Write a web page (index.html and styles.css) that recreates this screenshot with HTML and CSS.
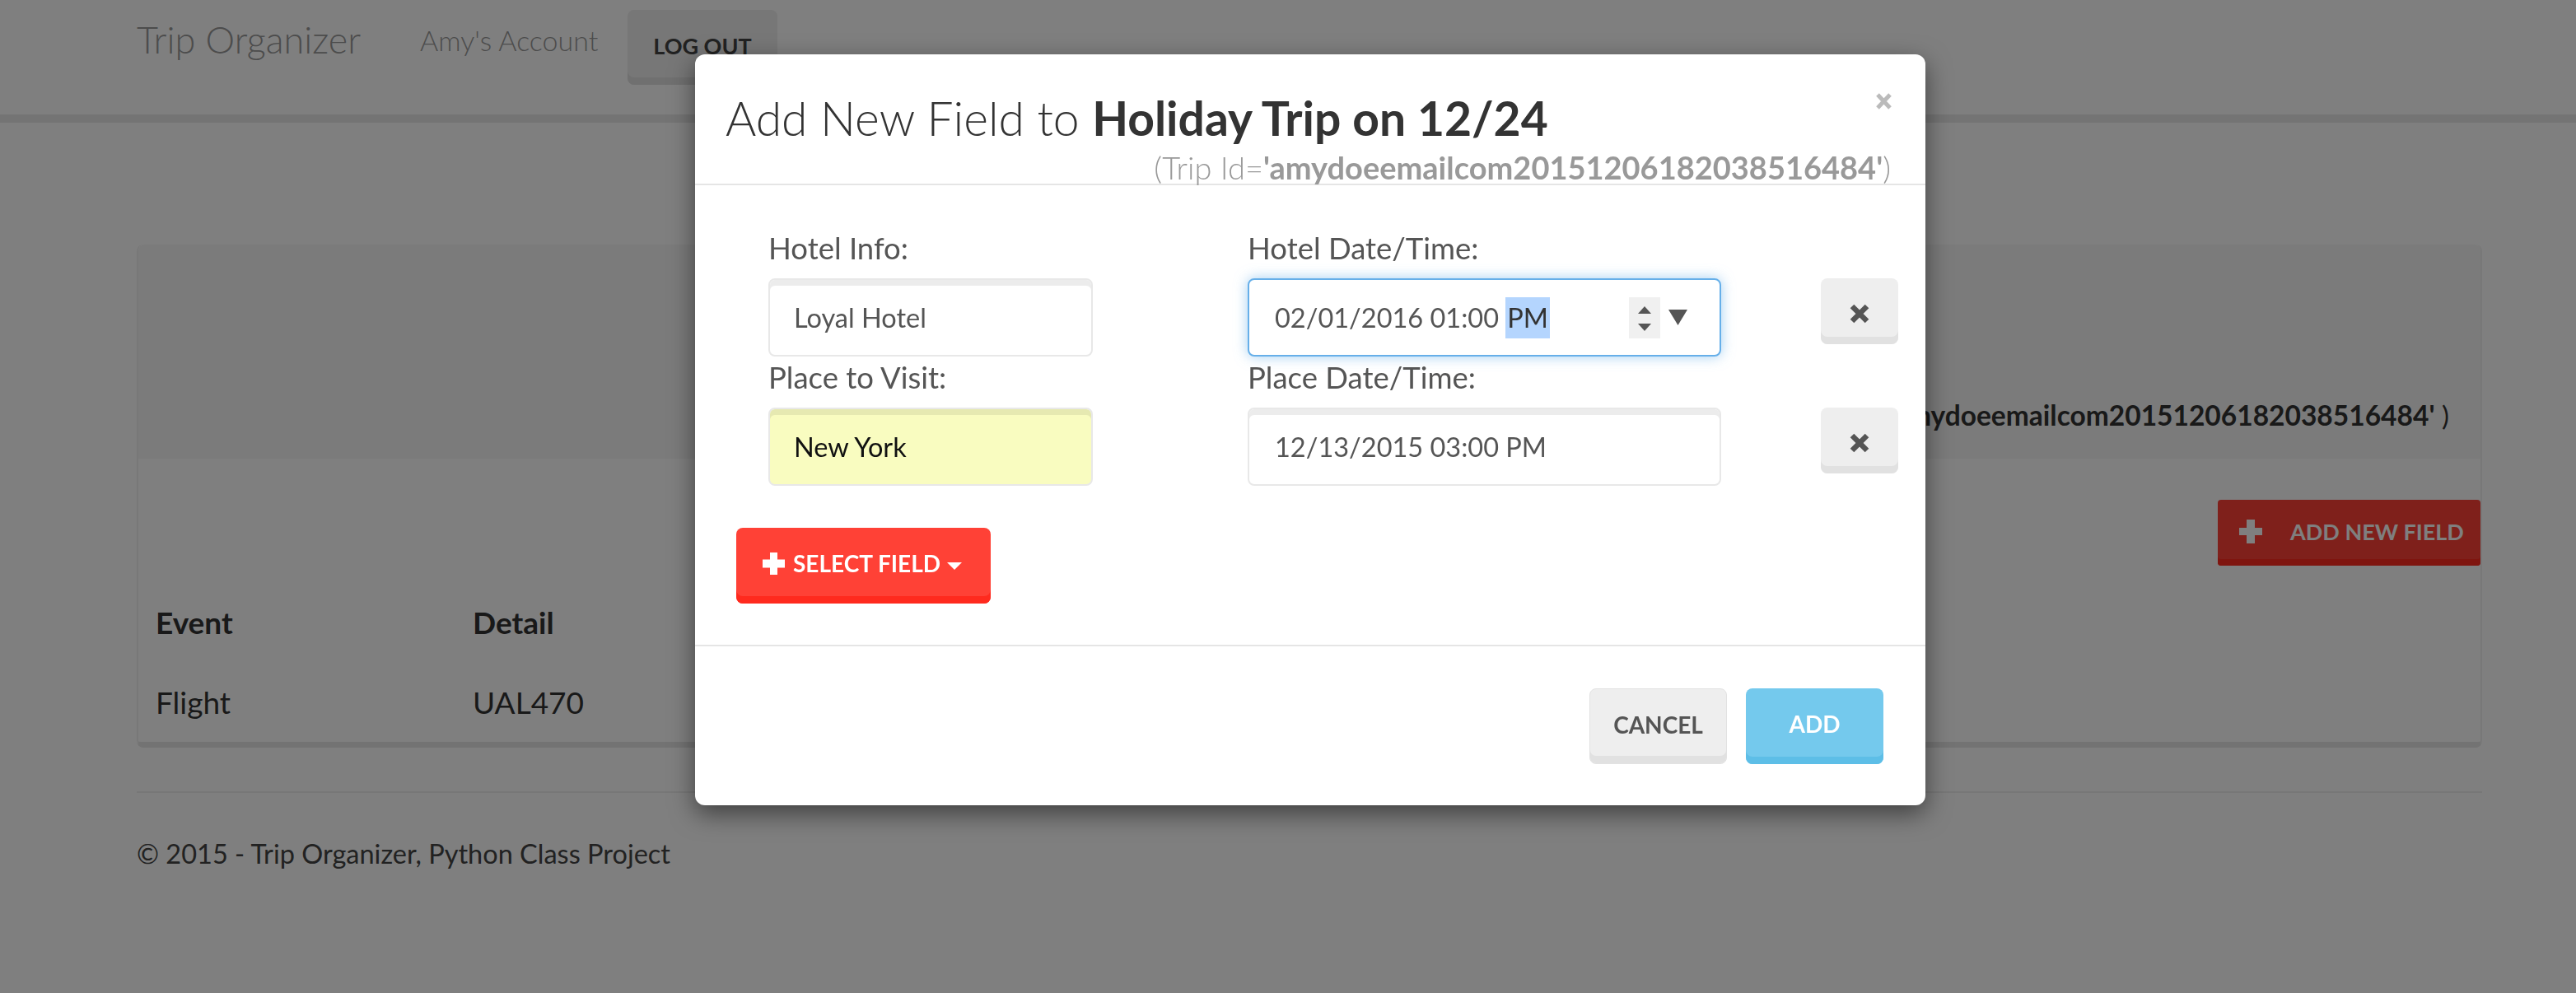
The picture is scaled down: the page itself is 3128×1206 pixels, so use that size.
FILE: index.html
```html
<!DOCTYPE html>
<html lang="en">
<head>
<meta charset="utf-8">
<title>Trip Organizer</title>
<link rel="stylesheet" href="styles.css">
</head>
<body>
<header class="navbar">
  <div class="nav-inner">
    <a class="brand">Trip Organizer</a>
    <a class="nav-link">Amy's Account</a>
    <button class="btn-logout">LOG OUT</button>
  </div>
</header>

<main class="container">
  <section class="panel">
    <div class="panel-heading">
      <p class="trip-id">(Trip Id=<b>'amydoeemailcom20151206182038516484'</b> )</p>
    </div>
    <div class="panel-body">
      <div class="actions">
        <button class="btn-add-field">
          <svg class="plus-lg" width="28" height="29" viewBox="0 0 28 29"><rect x="9" y="0" width="10" height="29"/><rect x="0" y="10" width="28" height="9"/></svg>
          <span>ADD NEW FIELD</span>
        </button>
      </div>
      <div class="table">
        <div class="th">Event</div><div class="th">Detail</div>
        <div class="td">Flight</div><div class="td">UAL470</div>
      </div>
    </div>
  </section>
  <footer class="footer">
    <hr class="footer-rule">
    <p class="footer-text">© 2015 - Trip Organizer, Python Class Project</p>
  </footer>
</main>

<div class="backdrop"></div>

<div class="modal">
  <div class="modal-header">
    <div class="title-row">
      <h2 class="modal-title">Add New Field to <b>Holiday Trip on 12/24</b></h2>
      <svg class="close" width="21" height="20" viewBox="0 0 21 20"><path d="M3 2 L18 18 M18 2 L3 18"/></svg>
    </div>
    <p class="subtitle">(Trip Id=<b>'amydoeemailcom20151206182038516484'</b>)</p>
  </div>

  <div class="modal-body">
    <div class="field-row">
      <div class="col-info">
        <label class="lbl">Hotel Info:</label>
        <input class="input" type="text" value="Loyal Hotel">
      </div>
      <div class="col-date">
        <label class="lbl">Hotel Date/Time:</label>
        <div class="input date-input focused">
          <span class="date-text">02/01/2016 01:00 <span class="sel">PM</span></span>
          <span class="spinner">
            <svg width="38" height="50" viewBox="0 0 38 50"><polygon points="11,20 27,20 19,11"/><polygon points="11,32 27,32 19,41"/></svg>
          </span>
          <svg class="drop" width="23" height="19" viewBox="0 0 23 19"><polygon points="0,0 23,0 11.5,19"/></svg>
        </div>
      </div>
      <button class="remove"><svg width="26" height="24" viewBox="0 0 26 24"><path d="M4 3 L22 21 M22 3 L4 21"/></svg></button>
    </div>

    <div class="field-row second">
      <div class="col-info">
        <label class="lbl">Place to Visit:</label>
        <input class="input autofill" type="text" value="New York">
      </div>
      <div class="col-date">
        <label class="lbl">Place Date/Time:</label>
        <div class="input date-input">
          <span class="date-text">12/13/2015 03:00 PM</span>
        </div>
      </div>
      <button class="remove"><svg width="26" height="24" viewBox="0 0 26 24"><path d="M4 3 L22 21 M22 3 L4 21"/></svg></button>
    </div>

    <button class="btn-select">
      <svg class="plus" width="27" height="27" viewBox="0 0 27 27"><rect x="9" y="0" width="9" height="27"/><rect x="0" y="8.5" width="27" height="10"/></svg>
      <span>SELECT FIELD</span>
      <svg class="caret" width="18" height="10" viewBox="0 0 18 10"><polygon points="0,0 18,0 9,9"/></svg>
    </button>
  </div>

  <div class="modal-footer">
    <button class="btn btn-cancel">CANCEL</button>
    <button class="btn btn-add">ADD</button>
  </div>
</div>
</body>
</html>
```

FILE: styles.css
```css
html, body {
  margin: 0;
  padding: 0;
  background: #fff;
  font-family: Lato, "Liberation Sans", sans-serif;
  height: 1206px;
  overflow: hidden;
}

button {
  font-family: Lato, "Liberation Sans", sans-serif;
  border: 0;
  cursor: pointer;
}

/* ---------- navbar ---------- */
.navbar {
  height: 139px;
  background: #fff;
  border-bottom: 10px solid #e9e9e9;
}
.nav-inner {
  display: flex;
  align-items: flex-start;
  padding-left: 166px;
}
.brand {
  width: 344px;
  margin-top: 18px;
  font-weight: 300;
  font-size: 45px;
  line-height: 60px;
  color: #999;
}
.nav-link {
  width: 252px;
  margin-top: 27px;
  font-weight: 300;
  font-size: 34px;
  line-height: 44px;
  color: #999;
}
.btn-logout {
  margin-top: 12px;
  width: 182px;
  height: 91px;
  padding: 6px 0 9px;
  font-weight: 700;
  font-size: 27px;
  line-height: 76px;
  color: #444;
  background: #eee;
  border-radius: 8px;
  box-shadow: inset 0 -9px 0 #e0e0e0;
}

/* ---------- page ---------- */
.container {
  margin-left: 166px;
  width: 2848px;
}
.panel {
  margin-top: 148px;
  background: #fff;
  border: 2px solid #f1f1f1;
  border-top: 0;
  border-bottom: 7px solid #e6e6e6;
  border-radius: 8px;
}
.panel-heading {
  box-sizing: border-box;
  height: 260px;
  background: #f6f6f6;
  border-radius: 8px 8px 0 0;
  display: flex;
  align-items: flex-end;
  justify-content: flex-end;
  padding: 0 38px 33px 0;
}
.trip-id {
  margin: 0;
  font-size: 33.5px;
  line-height: 40px;
  color: #333;
}
.panel-body {
  box-sizing: border-box;
  height: 344px;
  padding-top: 50px;
}
.actions {
  display: flex;
  justify-content: flex-end;
}
.btn-add-field {
  box-sizing: border-box;
  width: 319px;
  height: 80px;
  display: flex;
  align-items: center;
  padding: 4px 0 8px 26px;
  background: #ff4136;
  box-shadow: inset 0 -8px 0 #ff2a1e;
  border-radius: 4px;
  color: #fff;
  font-weight: 700;
  font-size: 27px;
}
.plus-lg {
  fill: #fff;
  margin-right: 34px;
}
.table {
  display: grid;
  grid-template-columns: 385px 1fr;
  row-gap: 37px;
  margin-top: 39px;
  padding-left: 21px;
  font-size: 37px;
  line-height: 60px;
  color: #333;
}
.th { font-weight: 700; }

.footer-rule {
  margin: 53px 0 0;
  border: 0;
  border-top: 2px solid #eee;
  height: 0;
}
.footer-text {
  margin: 54px 0 0;
  font-size: 32.5px;
  line-height: 40px;
  color: #444;
}

/* ---------- overlay & modal ---------- */
.backdrop {
  position: fixed;
  inset: 0;
  background: rgba(0, 0, 0, 0.5);
}
.modal {
  position: absolute;
  left: 844px;
  top: 66px;
  width: 1494px;
  background: #fff;
  border-radius: 12px;
  box-shadow: 0 10px 30px rgba(0, 0, 0, 0.5);
}
.modal-header {
  padding: 45px 40px 0 37px;
  border-bottom: 2px solid #e5e5e5;
}
.title-row {
  display: flex;
  justify-content: space-between;
  align-items: flex-start;
}
.modal-title {
  margin: 0;
  font-weight: 300;
  font-size: 57px;
  line-height: 64px;
  color: #333;
}
.modal-title b { font-weight: 700; }
.close {
  margin-top: 2px;
  stroke: #bbb;
  stroke-width: 5;
  fill: none;
}
.subtitle {
  margin: 8px 2px 0 0;
  text-align: right;
  font-weight: 300;
  font-size: 38px;
  line-height: 40px;
  color: #999;
}
.subtitle b { font-weight: 700; }

.modal-body {
  padding: 54px 33px 50px 50px;
}
.field-row {
  display: flex;
  align-items: flex-start;
  padding-left: 39px;
}
.field-row.second { margin-top: 3px; }
.col-info { width: 394px; }
.col-date { width: 575px; margin-left: 188px; }
.lbl {
  display: block;
  margin-bottom: 15px;
  font-size: 36.5px;
  line-height: 44px;
  color: #555;
}
.input {
  box-sizing: border-box;
  display: block;
  width: 100%;
  height: 95px;
  margin: 0;
  padding: 0 29px;
  border: 2px solid #e8e8e8;
  border-radius: 8px;
  background: #fff;
  box-shadow: inset 0 7px 0 rgba(0, 0, 0, 0.075);
  font-family: Lato, "Liberation Sans", sans-serif;
  font-size: 32.5px;
  color: #555;
  outline: none;
}
.input.autofill {
  background: #f9fcc0;
  color: #111;
}
.date-input {
  display: flex;
  align-items: center;
  padding: 0 39px 0 31px;
}
.date-input.focused {
  border-color: #66afe9;
  box-shadow: 0 0 16px rgba(102, 175, 233, 0.6);
}
.date-text {
  white-space: pre;
}
.sel {
  display: inline-block;
  line-height: 50px;
  padding: 0 2px;
  background: #b4d5fe;
  color: #333;
}
.spinner {
  margin-left: auto;
  width: 38px;
  height: 50px;
  background: #f0f0f0;
  display: flex;
}
.spinner svg, .drop { fill: #555; }
.drop { margin-left: 10px; }

.remove {
  box-sizing: border-box;
  width: 94px;
  height: 80px;
  margin: 59px 0 0 121px;
  padding: 6px 0 0;
  display: flex;
  align-items: center;
  justify-content: center;
  background: #eee;
  border-radius: 8px;
  box-shadow: inset 0 -9px 0 #e1e1e1;
}
.remove svg {
  stroke: #555;
  stroke-width: 6.5;
  fill: none;
}

.btn-select {
  box-sizing: border-box;
  margin-top: 51px;
  width: 309px;
  height: 92px;
  padding: 4px 0 9px 32px;
  display: flex;
  align-items: center;
  background: #ff4136;
  border-radius: 8px;
  box-shadow: inset 0 -9px 0 #ff2a1e;
  color: #fff;
  font-weight: 700;
  font-size: 28px;
  line-height: 79px;
}
.plus { fill: #fff; margin-right: 10px; }
.caret { fill: #fff; margin: 6px 0 0 8px; }

.modal-footer {
  border-top: 2px solid #e5e5e5;
  padding: 51px 51px 50px;
  display: flex;
  justify-content: flex-end;
  gap: 23px;
}
.btn {
  box-sizing: border-box;
  width: 167px;
  height: 92px;
  padding: 4px 0 9px;
  border-radius: 8px;
  font-weight: 700;
  font-size: 28px;
  line-height: 79px;
  text-align: center;
}
.btn-cancel {
  background: #eee;
  color: #555;
  border: 1px solid #e2e2e2;
  box-shadow: inset 0 -9px 0 #e1e1e1;
}
.btn-add {
  background: #74c9ed;
  color: #fff;
  box-shadow: inset 0 -9px 0 #5dbee7;
}
```
